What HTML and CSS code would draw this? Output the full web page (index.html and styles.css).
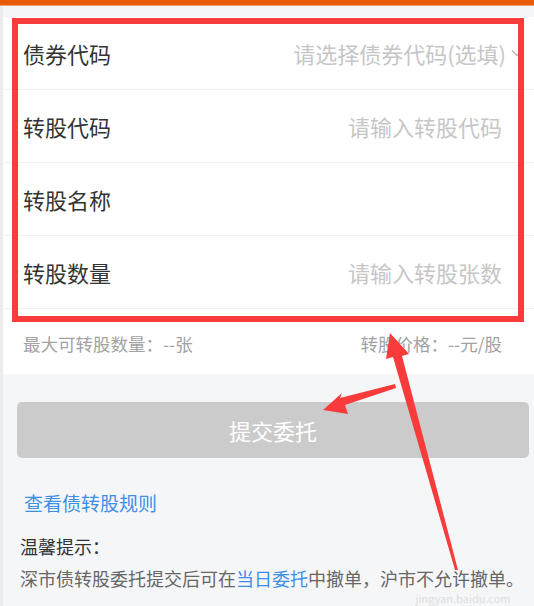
FILE: index.html
```html
<!DOCTYPE html>
<html lang="zh-CN">
<head>
    <meta charset="UTF-8">
    <meta name="viewport" content="width=device-width, initial-scale=1.0">
    <title>债转股</title>
    <link rel="stylesheet" href="styles.css">
</head>
<body>

    <div class="top-bar"></div>

    <div class="page">
        <div class="form">
            <div class="row">
                <span class="label">债券代码</span>
                <span class="value">请选择债券代码(选填)</span>
                <svg class="chevron" width="12" height="8" viewBox="0 0 12 8">
                    <path d="M1 1.5 L6 6.5 L11 1.5" fill="none" stroke="#b8b8b8" stroke-width="1.5"/>
                </svg>
            </div>
            <div class="row">
                <span class="label">转股代码</span>
                <span class="value">请输入转股代码</span>
                <span class="slot"></span>
            </div>
            <div class="row">
                <span class="label">转股名称</span>
                <span class="value"></span>
                <span class="slot"></span>
            </div>
            <div class="row">
                <span class="label">转股数量</span>
                <span class="value">请输入转股张数</span>
                <span class="slot"></span>
            </div>
            <div class="info-row">
                <span>最大可转股数量：--张</span>
                <span>转股价格：--元/股</span>
            </div>

            <!-- annotation box -->
            <div class="mark-box"></div>
        </div>

        <button class="submit-button">提交委托</button>

        <a class="rule-link" href="#">查看债转股规则</a>

        <div class="tips">
            <div class="tips-title">温馨提示：</div>
            <div class="tips-text">深市债转股委托提交后可在<a class="tips-link" href="#">当日委托</a>中撤单，沪市不允许撤单。</div>
        </div>

        <div class="watermark">jingyan.baidu.com</div>
    </div>

    <!-- annotation arrows -->
    <svg class="arrows" width="534" height="606" viewBox="0 0 534 606">
        <polygon points="390,333 409,354 402,356 458,570 455,570 393,357 386,359" fill="#f93b3b"/>
        <polygon points="323,410 342,393 340,398 395,384 396,388 345,405 348,414" fill="#f93b3b"/>
    </svg>

</body>
</html>
```

FILE: styles.css
```css
body {
    margin: 0;
    background-color: #f5f6f8;
    font-family: "Noto Sans CJK SC", "Noto Sans", sans-serif;
}

.top-bar {
    height: 5px;
    background-color: #e75b0b;
    border-bottom: 1px solid #f3a070;
}

.page {
    position: relative;
    min-height: 600px;
    border-left: 3px solid #ececec;
    padding-top: 11px;
}

.form {
    position: relative;
    background-color: #fff;
}

.row {
    display: flex;
    align-items: center;
    height: 72px;
    padding: 0 11px 0 20px;
    border-bottom: 1px solid #f1f1f1;
}

.label {
    font-size: 22px;
    color: #333;
}

.value {
    flex: 1;
    text-align: right;
    font-size: 22px;
    color: #c6c6c6;
}

.chevron {
    margin-left: 5px;
    width: 12px;
}

.slot {
    width: 21px;
}

.info-row {
    display: flex;
    justify-content: space-between;
    padding: 22px 32px 17px 20px;
    font-size: 17.5px;
    line-height: 26px;
    color: #a2a2a2;
}

.mark-box {
    position: absolute;
    left: 9px;
    top: 1px;
    width: 500px;
    height: 292px;
    border: 6px solid #f93b3b;
}

.submit-button {
    display: block;
    width: 512px;
    height: 56px;
    margin: 28px 0 0 14px;
    border: none;
    border-radius: 5px;
    background-color: #cbcbcb;
    color: #fff;
    font-family: inherit;
    font-size: 22px;
}

.rule-link {
    display: block;
    margin: 32px 0 0 21px;
    font-size: 19px;
    line-height: 26px;
    color: #3d8fe6;
    text-decoration: none;
}

.tips {
    margin: 15px 0 0 17px;
    font-size: 18px;
    color: #666;
}

.tips-title {
    line-height: 31px;
    color: #333;
}

.tips-text {
    line-height: 26px;
    margin-top: 3px;
}

.tips-link {
    color: #3d8fe6;
    text-decoration: none;
}

.watermark {
    margin: 1px 0 0 410px;
    width: 100px;
    text-align: center;
    font-size: 11px;
    line-height: 13px;
    color: rgba(215, 215, 215, 0.8);
}

.arrows {
    position: absolute;
    left: 0;
    top: 0;
    pointer-events: none;
}
```
